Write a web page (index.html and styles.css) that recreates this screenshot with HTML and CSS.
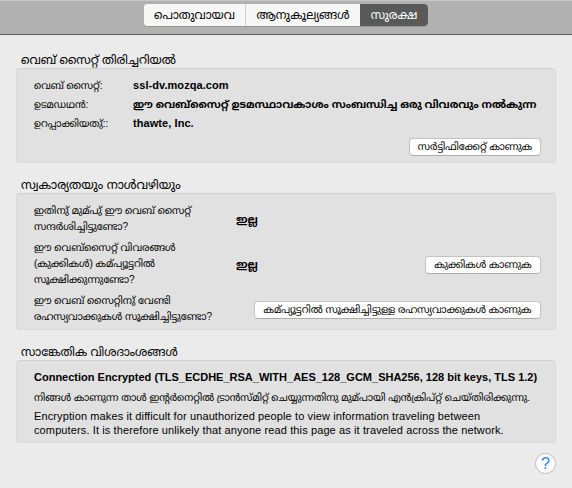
FILE: index.html
```html
<!DOCTYPE html>
<html lang="ml">
<head>
<meta charset="utf-8">
<title>സുരക്ഷ</title>
<link rel="stylesheet" href="styles.css">
</head>
<body>
<header class="toolbar">
  <nav class="tabs">
    <button class="tab tab-general"><span>പൊതുവായവ</span></button>
    <button class="tab tab-perms"><span>ആനുകൂല്യങ്ങള്‍</span></button>
    <button class="tab tab-security active"><span>സുരക്ഷ</span></button>
  </nav>
</header>
<main class="content">
  <section class="group identity">
    <h2><span class="title-identity">വെബ് സൈറ്റ് തിരിച്ചറിയല്‍</span></h2>
    <div class="panel">
      <dl class="facts">
        <dt>വെബ് സൈറ്റ്:</dt><dd class="latin">ssl-dv.mozqa.com</dd>
        <dt>ഉടമഡഥന്‍:</dt><dd class="owner">ഈ വെബ്സൈറ്റ് ഉടമസ്ഥാവകാശം സംബന്ധിച്ച ഒരു വിവരവും നല്‍കുന്ന</dd>
        <dt>ഉറപ്പാക്കിയതു്::</dt><dd class="latin">thawte, Inc.</dd>
      </dl>
      <button class="push b1">സര്‍ട്ടിഫിക്കേറ്റ് കാണുക</button>
    </div>
  </section>
  <section class="group privacy">
    <h2><span class="title-privacy">സ്വകാര്യതയും നാള്‍വഴിയും</span></h2>
    <div class="panel">
      <div class="row r1"><p>ഇതിനു് മുമ്‌പു് ഈ വെബ് സൈറ്റ്<br>സന്ദര്‍ശിച്ചിട്ടുണ്ടോ?</p><b>ഇല്ല</b></div>
      <div class="row r2"><p>ഈ വെബ്സൈറ്റ് വിവരങ്ങള്‍<br>(കുക്കികള്‍) കമ്‌പ്യൂട്ടറില്‍<br>സൂക്ഷിക്കുന്നുണ്ടോ?</p><b>ഇല്ല</b><button class="push b2">കുക്കികള്‍ കാണുക</button></div>
      <div class="row r3"><p>ഈ വെബ് സൈറ്റിനു് വേണ്ടി<br>രഹസ്യവാക്കുകള്‍ സൂക്ഷിച്ചിട്ടുണ്ടോ?</p><button class="push b3">കമ്‌പ്യൂട്ടറില്‍ സൂക്ഷിച്ചിട്ടുള്ള രഹസ്യവാക്കുകള്‍ കാണുക</button></div>
    </div>
  </section>
  <section class="group technical">
    <h2><span class="title-technical">സാങ്കേതിക വിശദാംശങ്ങള്‍</span></h2>
    <div class="panel">
      <p class="cipher">Connection Encrypted (TLS_ECDHE_RSA_WITH_AES_128_GCM_SHA256, 128 bit keys, TLS 1.2)</p>
      <p class="sent">നിങ്ങള്‍ കാണുന്ന താള്‍ ഇന്റര്‍നെറ്റില്‍ ട്രാന്‍സ്മിറ്റ് ചെയ്യുന്നതിനു മുമ്‌പായി എന്‍ക്രിപ്റ്റ് ചെയ്തിരിക്കുന്നു.</p>
      <p class="note">Encryption makes it difficult for unauthorized people to view information traveling between<br>computers. It is therefore unlikely that anyone read this page as it traveled across the network.</p>
    </div>
  </section>
  <button class="help">?</button>
</main>
</body>
</html>
```

FILE: styles.css
```css
* { box-sizing: border-box; margin: 0; padding: 0; }
body { width: 572px; height: 488px; overflow: hidden; background: #ebebeb; color: #000; font: 11px/16px "Liberation Sans", "Noto Sans Malayalam", "Noto Sans", sans-serif; }
button { font: inherit; color: inherit; border: 0; white-space: nowrap; display: flex; align-items: center; justify-content: center; }
.toolbar { height: 35px; padding-top: 3px; background: #b1b1b1; border-bottom: 1px solid #5c5c5c; border-top: 1px solid #c8c8c8; display: flex; justify-content: center; align-items: flex-start; }
.tabs { display: flex; width: 284px; height: 22px; border-radius: 4px; overflow: hidden; background: #f7f7f7; box-shadow: 0 1px 0 #969696; font-size: 11.7px; }
.tab { height: 22px; background: #f7f7f7; }
.tab-general { width: 102px; border-right: 1px solid #d0d0d0; }
.tab-perms { width: 114px; }
.tab-security { width: 68px; }
.tab.active { background: #595959; color: #fff; }
.content { padding: 15px 16px 0; display: flex; flex-direction: column; }
h2 { font-size: 12px; font-weight: 400; height: 18px; line-height: 20px; padding-left: 5px; white-space: nowrap; }
.title-identity { font-size: 11.8px; }
.title-privacy { font-size: 12.1px; }
.title-technical { font-size: 11.7px; }
.panel { background: #e1e1e1; border: 1px solid #dadada; border-top-color: #d0d0d0; border-radius: 4px; }
.identity .panel { height: 95px; padding: 7px 14px 0 17px; display: flex; flex-direction: column; }
.facts { display: grid; grid-template-columns: 99px 405px; grid-auto-rows: 19px; line-height: 19px; }
dt { font-size: 10px; }
dd { font-weight: 700; white-space: nowrap; }
.latin { letter-spacing: 0.07px; }
.owner { font-size: 10.5px; overflow: hidden; }
.push { height: 18px; margin-left: auto; background: #fff; border: 1px solid #c3c3c3; border-bottom-color: #acacac; border-radius: 4px; font-size: 10px; }
.b1 { width: 132px; margin-top: 5px; }
.b2 { width: 116px; margin-top: 2px; }
.b3 { width: 287px; margin-top: 2px; }
.privacy, .technical { margin-top: 12px; }
.privacy .panel { height: 137px; padding: 9px 14px 0 17px; }
.row { display: flex; align-items: center; }
.row p { width: 202px; flex: none; font-size: 10.05px; white-space: nowrap; }
.row b { flex: none; }
.r1 { height: 32px; }
.r2 { height: 48px; margin-top: 5px; }
.r3 { height: 32px; margin-top: 5px; }
.r3 p { width: 200px; }
.technical .panel { height: 83px; padding: 8px 0 0 17px; white-space: nowrap; }
.cipher { font-weight: 700; }
.sent { margin-top: 5px; font-size: 9.94px; }
.note { line-height: 14px; margin-top: 3px; letter-spacing: 0.115px; }
.help { width: 21px; height: 21px; margin: 10px 0 0 auto; border-radius: 50%; background: #fff; border: 1px solid #bdbdbd; color: #1a82fb; font-size: 16px; }
```
